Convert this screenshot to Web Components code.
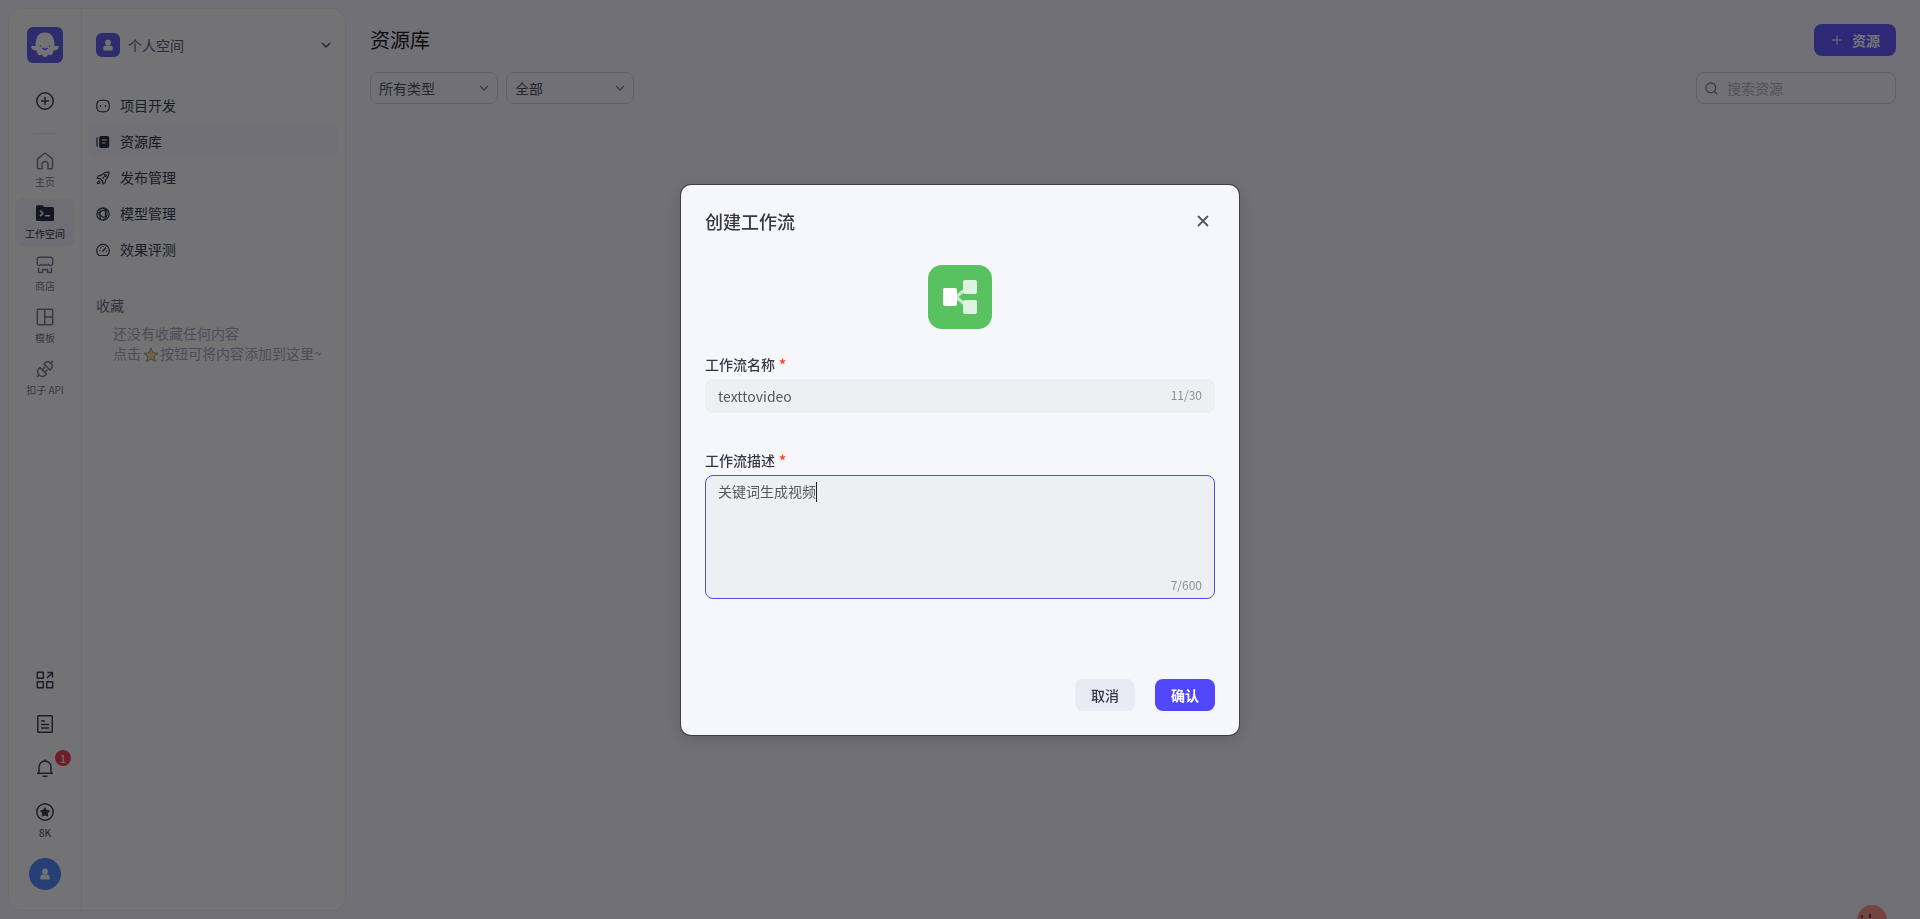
<!DOCTYPE html>
<html lang="zh-CN">
<head>
<meta charset="utf-8">
<meta name="viewport" content="width=device-width, initial-scale=1">
<title>资源库</title>
<style>
  html, body { margin: 0; height: 100%; }
  body {
    font-family: "Noto Sans CJK SC", "Noto Sans", sans-serif;
    font-size: 14px;
    line-height: 20px;
    color: #2a2f3d;
    background: #f9f8ff;
    overflow: hidden;
  }
</style>
</head>
<body>
<workspace-app></workspace-app>
<script>
const ICONS = {
  plusCircle: ['0 0 18 18', '<circle cx="9" cy="9" r="8.2"/><path d="M9 5v8M5 9h8"/>'],
  home: ['0 0 18 18', '<path d="M1.5 6.8 9 1l7.5 5.8v8.4a1.5 1.5 0 0 1-1.5 1.5h-3v-4.200a3 3 0 0 0-6 0v4.200H3a1.5 1.5 0 0 1-1.5-1.5z"/>'],
  workspace: ['0 0 18 18', '<path d="M0 2.5A1.2 1.2 0 0 1 1.200 1.300H6.500L8.500 3H16.500A1.500 1.500 0 0 1 18 4.500V15.500A1.500 1.500 0 0 1 16.500 17H1.500A1.500 1.500 0 0 1 0 15.500z" fill="currentColor" stroke="none"/><path d="m4 6.500 3 2.800-3 2.800M9 11.800h5" stroke="#f0eff8" stroke-width="1.6"/>'],
  store: ['0 0 18 18', '<path d="M3.300 1.200h11.400a2 2 0 0 1 2 2V7.500a2.200 2.200 0 0 1-4.200.800 2.200 2.200 0 0 1-3.500 0 2.200 2.200 0 0 1-3.500 0 2.200 2.200 0 0 1-4.200-.800V3.200a2 2 0 0 1 2-2zM2.500 11.500v5H6.500V13.500h5v3h4v-5"/>'],
  template: ['0 0 18 18', '<rect x="1.3" y="1.3" width="15.4" height="15.4" rx="1.2"/><path d="M8.800 1.500v15M9 9h7.500"/>'],
  plug: ['0 0 18 18', '<path d="m1 17 2.200-2.200M15 3l2-2M4 7.500l6.500 6.500-1 1a4.500 4.500 0 0 1-6.500-6.500zM8 4l6 6 1.200-1.200A4.300 4.300 0 0 0 9.200 2.800zM6.500 9.500 9 7M9 12l2.500-2.500"/>'],
  apps: ['0 0 18 18', '<rect x="1.300" y="1.300" width="6" height="6"/><rect x="1.300" y="10.700" width="6" height="6"/><rect x="10.700" y="10.700" width="6" height="6"/><path d="m11 7 5-5M11.500 1.500H16.500V6.500"/>'],
  doc: ['0 0 18 18', '<rect x="1.800" y=".8" width="14.400" height="16.400" rx=".8"/><path d="M5 6h4M5 9.600h8M5 13h8"/>'],
  bell: ['0 0 18 18', '<path d="M3 14V8a6 6 0 0 1 12 0v6M1 14.300h16M6.500 17.300h5M8 1.300h2"/>'],
  credit: ['0 0 18 18', '<circle cx="9" cy="9" r="8.2"/><path d="m9 5 1.300 2.500 2.700.5-1.900 2 .4 2.700L9 11.600l-2.500 1.100.4-2.700L5 8l2.700-.5z" fill="currentColor"/>'],
  chevron: ['0 0 10 10', '<path d="m1 3 4 4 4-4"/>'],
  plus: ['0 0 10 10', '<path d="M5 0v10M0 5h10"/>'],
  close: ['0 0 12 12', '<path d="m1.500 1.500 9 9M10.500 1.500l-9 9" stroke-linecap="round"/>'],
  search: ['0 0 14 14', '<circle cx="6.3" cy="6.3" r="5.3"/><path d="m10.200 10.200 3 3"/>'],
  bot: ['0 0 14 14', '<path d="M4 1.500Q7 .9 10 1.500 12.800 1.800 13 4.500 13.700 7 13 9.500 12.500 12 10 12.500 7 13.100 4 12.500 1.500 12 1 9.500.300 7 1 4.500 1.200 1.800 4 1.500z"/><path d="M4.500 6v2M9.500 6v2"/>'],
  library: ['0 0 14 14', '<path d="M1 2.500v9"/><rect x="3.200" y="1" width="10" height="12" rx="1.8" fill="currentColor" stroke="none"/><path d="M6 5h5M6 8h3.500" stroke="#f3f2fc"/>'],
  rocket: ['0 0 14 14', '<path d="M13 1Q8.500.8 5.500 4.200L2.500 4.800 1 7.200l3 .3 2.500 2.500.3 3 2.400-1.500.6-3Q13.200 5.500 13 1zM3.500 9.500Q1.500 10 1.300 12.700 4 12.500 4.500 10.500M6.500 7.500 8 6"/><circle cx="9.500" cy="4.500" r="1"/>'],
  model: ['0 0 14 14', '<path d="M7 .8a6.200 6.200 0 0 1 0 12.400A6.200 6.200 0 0 1 7 .8zM4 1.800v9Q4 13 6 13M1 6.500 7 3.500Q9.500 2.800 9.500 5.500v3Q9.500 10 8 10.500L6 9.500 2.500 7M6 1.200Q12 2 11 8q-.5 3-4 5"/>'],
  gauge: ['0 0 14 14', '<path d="M3 12.500A6.300 6.300 0 1 1 11 12.500zM6.500 8.500l3.500-4M3.200 7.500h1.200M7 3v1M4.300 4.500l.8.8M10 8h1"/>'],
  person: ['0 0 12 12', '<g fill="currentColor" stroke="none"><circle cx="6" cy="3.4" r="2.9"/><path d="M1.200 10.500Q1.200 6.600 4 6.600h4q2.800 0 2.800 3.900 0 1-1 1H2.200q-1 0-1-1z"/></g>'],
  star: ['0 0 16 16', '<path d="m8 1 2 4.800 5.200.4-4 3.400 1.300 5.100L8 12l-4.500 2.700 1.300-5.100-4-3.400L6 5.800z" fill="#f5d58c" stroke="#8a7358" stroke-width=".8"/>'],
  logo: ['0 0 36 36', '<path d="M8.500 19Q8.500 5.500 18 5.500T27.500 19q1.500 0 3.300-.2 1.700.3.9 2.200-2 3-5.200 2.500-.2 3-2 4.500-2 .8-3.200-.8-.8 2.800-3.300 3-2.500-.2-3.300-3-1.200 1.600-3.200.8-1.800-1.500-2-4.500-3.200.5-5.200-2.500-.8-1.900.9-2.200 1.800.2 3.300.2z" fill="#fff" stroke="none"/><path d="M13.500 18.500v1M22.500 18.500v1M15.500 21q2.500 2.500 5 0" stroke="#5147ff" stroke-width="1.4"/>'],
  workflow: ['0 0 64 64', '<path d="m28 32 11-9M28 32l11 9" stroke="#c4e9c6" stroke-width="3.500"/><rect x="35" y="15" width="14" height="14" rx="2" fill="#def3df" stroke="none"/><rect x="35" y="35" width="14" height="14" rx="2" fill="#def3df" stroke="none"/><rect x="15" y="23" width="14" height="18" rx="2" fill="#fff" stroke="none"/>'],
  mascot: ['0 0 32 32', '<circle cx="16" cy="16" r="15" fill="#ff8a7e" stroke="none"/><path d="M6 11v3M14 10v4" stroke="#251820" stroke-width="1.5"/>']
};

function define(name, html, setup) {
  const template = document.createElement('template');
  template.innerHTML = '<style>*{box-sizing:border-box}button,input,textarea,select{font:inherit;color:inherit;margin:0}</style>' + html;
  customElements.define(name, class extends HTMLElement {
    constructor() {
      super();
      this.attachShadow({ mode: 'open' }).append(template.content.cloneNode(true));
    }
    connectedCallback() { if (setup) setup.call(this, this.shadowRoot); }
  });
}

function makeIcon(name) {
  const icon = document.createElement('ui-icon');
  icon.setAttribute('name', name);
  return icon;
}

define('ui-icon', `
<style>
  :host { display: block; flex: none; width: var(--size, 18px); height: var(--size, 18px); }
  svg { display: block; width: 100%; height: 100%; fill: none; stroke: currentColor; stroke-width: var(--stroke, 1.5); stroke-linejoin: round; overflow: visible; }
</style><svg aria-hidden="true"></svg>`, function (root) {
  const [box, body] = ICONS[this.getAttribute('name')];
  const svg = root.querySelector('svg');
  svg.setAttribute('viewBox', box);
  svg.innerHTML = body;
});

define('rail-item', `
<style>
  :host { display: block; color: #6b6f84; }
  :host([active]) { color: #10142a; }
  a { display: flex; flex-direction: column; align-items: center; gap: 5px; width: 60px; height: 48px; padding-top: 6px; border-radius: 8px; color: inherit; text-decoration: none; font-size: 10px; line-height: 14px; }
  :host([active]) a { background: #f3f2fb; }
</style><a href="#"><slot></slot></a>`, function (root) {
  root.querySelector('a').prepend(makeIcon(this.getAttribute('icon')));
});

define('nav-item', `
<style>
  :host { display: block; color: #23283a; --size: 14px; --stroke: 1.2; }
  a { display: flex; align-items: center; gap: 10px; height: 32px; padding: 0 8px; border-radius: 8px; color: inherit; text-decoration: none; }
  ui-icon { margin-top: 1px; }
  :host([active]) { color: #10142a; }
  :host([active]) a { background: #f9f8fe; }
</style><a href="#"><slot></slot></a>`, function (root) {
  root.querySelector('a').prepend(makeIcon(this.getAttribute('icon')));
});

define('side-rail', `
<style>
  :host { display: flex; flex-direction: column; align-items: center; width: 73px; padding: 18px 0 20px; border-right: 1px solid #ececf5; }
  button, .logo { display: grid; place-items: center; padding: 0; border: 0; background: none; }
  .logo { width: 36px; height: 36px; border-radius: 6px; background: #544fe6; --size: 36px; }
  .add { width: 32px; height: 32px; margin-top: 22px; }
  hr { width: 24px; height: 1px; margin: 16px 0 12px; border: 0; background: #ececf3; }
  nav { display: flex; flex-direction: column; gap: 4px; }
  .foot { display: flex; flex-direction: column; align-items: center; gap: 12px; margin-top: auto; }
  .foot button { width: 32px; height: 32px; }
  .bell { position: relative; }
  .badge { position: absolute; top: -2px; right: -10px; width: 16px; height: 16px; border-radius: 8px; background: #f02b40; color: #fff; font-size: 11px; line-height: 16px; text-align: center; }
  .foot .credit { height: 46px; padding-top: 7px; align-content: start; gap: 5px; font-size: 10px; line-height: 14px; }
  .foot .avatar { margin-top: 4px; border-radius: 50%; background: #4080ff; color: #fff; --size: 12px; }
</style>
<a class="logo" href="#" aria-label="首页"><ui-icon name="logo"></ui-icon></a>
<button class="add" aria-label="新建"><ui-icon name="plusCircle"></ui-icon></button>
<hr>
<nav>
  <rail-item icon="home">主页</rail-item>
  <rail-item icon="workspace" active>工作空间</rail-item>
  <rail-item icon="store">商店</rail-item>
  <rail-item icon="template">模板</rail-item>
  <rail-item icon="plug">扣子 API</rail-item>
</nav>
<div class="foot">
  <button aria-label="应用"><ui-icon name="apps"></ui-icon></button>
  <button aria-label="文档"><ui-icon name="doc"></ui-icon></button>
  <button class="bell" aria-label="通知"><ui-icon name="bell"></ui-icon><span class="badge">1</span></button>
  <button class="credit"><ui-icon name="credit"></ui-icon><span>8K</span></button>
  <button class="avatar" aria-label="账户"><ui-icon name="person"></ui-icon></button>
</div>`);

define('space-nav', `
<style>
  :host { display: block; flex: 1; min-width: 0; padding: 20px 6px; }
  .space { display: flex; align-items: center; gap: 8px; width: 100%; height: 32px; padding: 0 8px; border: 0; background: none; text-align: left; color: #454a5c; --size: 10px; }
  .mark { display: grid; place-items: center; width: 24px; height: 24px; border-radius: 6px; background: #544fe6; color: #fff; --size: 12px; }
  .name { flex: 1; }
  nav { display: flex; flex-direction: column; gap: 4px; margin-top: 28px; }
  h2 { margin: 30px 8px 8px; font-size: 14px; line-height: 20px; font-weight: 400; color: #5c6076; }
  p { margin: 0 0 0 25px; color: #a0a2b1; white-space: nowrap; }
  p ui-icon { display: inline-block; vertical-align: -4px; margin: 0 1px 0 2px; --size: 16px; }
</style>
<button class="space"><span class="mark"><ui-icon name="person"></ui-icon></span><span class="name">个人空间</span><ui-icon name="chevron"></ui-icon></button>
<nav>
  <nav-item icon="bot">项目开发</nav-item>
  <nav-item icon="library" active>资源库</nav-item>
  <nav-item icon="rocket">发布管理</nav-item>
  <nav-item icon="model">模型管理</nav-item>
  <nav-item icon="gauge">效果评测</nav-item>
</nav>
<h2>收藏</h2>
<p>还没有收藏任何内容<br>点击<ui-icon name="star"></ui-icon>按钮可将内容添加到这里~</p>`);

define('filter-select', `
<style>
  :host { display: grid; width: 128px; height: 32px; align-items: center; --size: 10px; --stroke: 1.2; color: #3c4152; }
  select, ui-icon { grid-area: 1 / 1; }
  select { width: 100%; height: 32px; padding: 0 8px; appearance: none; border: 1px solid #d0d0da; border-radius: 8px; background: none; }
  ui-icon { justify-self: end; margin-right: 9px; color: #6b6f84; pointer-events: none; }
</style><select><option></option></select><ui-icon name="chevron"></ui-icon>`, function (root) {
  root.querySelector('select').setAttribute('aria-label', this.getAttribute('label'));
  root.querySelector('option').textContent = this.getAttribute('value');
});

define('library-page', `
<style>
  :host { display: block; flex: 1; min-width: 0; padding: 24px 24px 0; }
  header, .filters { display: flex; align-items: center; gap: 8px; }
  h1 { flex: 1; margin: 0; font-size: 20px; line-height: 32px; font-weight: 400; color: #000; }
  .create { display: flex; align-items: center; gap: 10px; height: 32px; padding: 0 16px 0 18px; border: 0; border-radius: 8px; background: #5147ff; color: #fff; font-weight: 700; --size: 10px; --stroke: 1; }
  .filters { margin-top: 16px; }
  .search { display: flex; align-items: center; gap: 9px; width: 200px; height: 32px; margin-left: auto; padding: 0 8px; border: 1px solid #d0d0da; border-radius: 8px; color: #5c6076; --size: 13px; --stroke: 1.2; }
  input { flex: 1; min-width: 0; height: 20px; padding: 0; border: 0; outline: 0; background: none; }
  input::placeholder { color: #afb0bb; opacity: 1; }
</style>
<header><h1>资源库</h1><button class="create"><ui-icon name="plus"></ui-icon><span>资源</span></button></header>
<div class="filters">
  <filter-select label="资源类型" value="所有类型"></filter-select>
  <filter-select label="范围" value="全部"></filter-select>
  <label class="search"><ui-icon name="search"></ui-icon><input type="text" placeholder="搜索资源" aria-label="搜索资源"></label>
</div>`);

define('text-field', `
<style>
  :host { display: block; }
  label { display: block; margin-bottom: 5px; line-height: 20px; font-weight: 500; color: #383743; }
  .required { margin-left: 4px; font-weight: 700; color: #ff441e; }
  .box { display: flex; align-items: center; height: 34px; padding: 0 13px; border-radius: 8px; background: #eeeff3; color: #55575e; }
  input, textarea { flex: 1; min-width: 0; padding: 0; border: 0; outline: 0; background: none; }
  input { height: 22px; }
  .count { margin-bottom: 2px; font-size: 12px; line-height: 16px; color: #8f9096; }
  .box.multi { flex-direction: column; align-items: stretch; height: 124px; padding: 5px 12px 3px; border: 1px solid #4d53e8; }
  textarea { line-height: 20px; resize: none; caret-color: transparent; background: linear-gradient(#1c1f23, #1c1f23) 98px 1px / 1px 20px no-repeat; }
  .multi .count { align-self: flex-end; }
</style>
<label for="control"><span class="text"></span><span class="required">*</span></label>
<div class="box"><span class="count"></span></div>`, function (root) {
  const multi = this.hasAttribute('multiline');
  const control = document.createElement(multi ? 'textarea' : 'input');
  control.id = 'control';
  control.required = true;
  control.value = this.getAttribute('value');
  root.querySelector('.text').textContent = this.getAttribute('label');
  const count = root.querySelector('.count');
  const max = this.getAttribute('max');
  const update = () => { count.textContent = control.value.length + '/' + max; };
  control.addEventListener('input', update);
  update();
  const box = root.querySelector('.box');
  box.classList.toggle('multi', multi);
  box.prepend(control);
});

define('create-dialog', `
<style>
  :host { position: fixed; inset: 0; display: grid; place-items: center; background: rgba(22, 22, 26, .6); }
  section { display: flex; flex-direction: column; width: 558px; padding: 24px; border-radius: 10px; background: #f6f7fc; box-shadow: 0 0 0 1px rgba(20, 20, 24, .5), 0 4px 14px rgba(0, 0, 0, .15); }
  header { display: flex; align-items: center; justify-content: space-between; height: 24px; }
  h2 { margin: 0; font-size: 18px; line-height: 24px; font-weight: 500; color: #383743; }
  button { padding: 0; border: 0; }
  .close { display: grid; place-items: center; width: 24px; height: 24px; background: none; color: #55575e; --size: 12px; --stroke: 1.8; }
  .mark { align-self: center; margin: 32px 0 25px; border-radius: 14px; background: #58c160; --size: 64px; }
  text-field + text-field { margin-top: 37px; }
  footer { display: flex; justify-content: flex-end; gap: 20px; margin-top: 80px; }
  footer button { width: 60px; height: 32px; border-radius: 8px; background: #e8ebf3; color: #383743; font-weight: 500; }
  footer .ok { background: #5147ff; color: #fff; font-weight: 700; }
</style>
<section role="dialog" aria-modal="true" aria-labelledby="title">
  <header><h2 id="title">创建工作流</h2><button class="close" aria-label="关闭"><ui-icon name="close"></ui-icon></button></header>
  <ui-icon class="mark" name="workflow"></ui-icon>
  <text-field label="工作流名称" value="texttovideo" max="30"></text-field>
  <text-field label="工作流描述" value="关键词生成视频" max="600" multiline></text-field>
  <footer><button>取消</button><button class="ok">确认</button></footer>
</section>`);

define('workspace-app', `
<style>
  :host { display: flex; min-height: 100vh; }
  aside { display: flex; width: 338px; margin: 8px 0 8px 8px; border: 1px solid #ececf5; border-radius: 14px; background: #fff; }
  .helper { position: fixed; right: 32px; bottom: -17px; --size: 32px; }
</style>
<aside><side-rail></side-rail><space-nav></space-nav></aside>
<library-page></library-page>
<ui-icon class="helper" name="mascot"></ui-icon>
<create-dialog></create-dialog>`);
</script>
</body>
</html>
